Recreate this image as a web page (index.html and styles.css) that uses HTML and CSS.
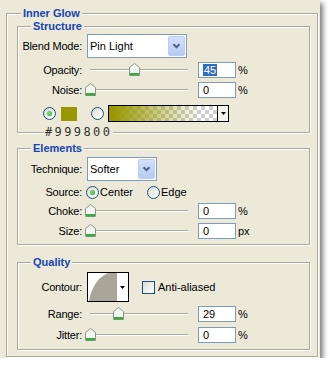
FILE: index.html
```html
<!DOCTYPE html>
<html>
<head>
<meta charset="utf-8">
<link rel="stylesheet" href="styles.css">
</head>
<body>
<div class="panel">
  <div class="group outer">
    <div class="title">Inner Glow</div>

    <div class="group sub structure">
      <div class="title">Structure</div>
      <div class="row r-select r-first">
        <span class="label">Blend Mode:</span>
        <div class="select wide">
          <span class="select-text">Pin Light</span>
          <span class="select-btn"><svg width="9" height="6" viewBox="0 0 9 6"><path d="M1.5 1.2 L4.5 4.2 L7.5 1.2" fill="none" stroke="#4d6185" stroke-width="2"/></svg></span>
        </div>
      </div>
      <div class="row r-field">
        <span class="label">Opacity:</span>
        <div class="slider" style="--v:0.45">
          <div class="track"></div>
          <svg class="thumb" width="11" height="13" viewBox="0 0 11 13"><path d="M0.5 4.5 L5.5 0.5 L10.5 4.5 V12.5 H0.5 Z" fill="#f3f5f1" stroke="#8c9789"/><rect x="1" y="10" width="9" height="2.5" fill="#3aa844"/></svg>
        </div>
        <div class="input"><span class="sel">45</span></div><span class="unit">%</span>
      </div>
      <div class="row r-field">
        <span class="label">Noise:</span>
        <div class="slider" style="--v:0">
          <div class="track"></div>
          <svg class="thumb" width="11" height="13" viewBox="0 0 11 13"><path d="M0.5 4.5 L5.5 0.5 L10.5 4.5 V12.5 H0.5 Z" fill="#f3f5f1" stroke="#8c9789"/><rect x="1" y="10" width="9" height="2.5" fill="#3aa844"/></svg>
        </div>
        <div class="input">0</div><span class="unit">%</span>
      </div>
      <div class="row r-color">
        <span class="radio checked color-radio"></span>
        <span class="swatch"></span>
        <span class="radio grad-radio"></span>
        <div class="gradient">
          <span class="grad-fill"></span>
          <span class="grad-btn"><svg width="5" height="3" viewBox="0 0 5 3"><path d="M0 0 H5 L2.5 3 Z" fill="#000"/></svg></span>
        </div>
      </div>
    </div>
    <div class="hex">#999800</div>

    <div class="group sub elements">
      <div class="title">Elements</div>
      <div class="row r-select r-tech">
        <span class="label">Technique:</span>
        <div class="select narrow">
          <span class="select-text">Softer</span>
          <span class="select-btn"><svg width="9" height="6" viewBox="0 0 9 6"><path d="M1.5 1.2 L4.5 4.2 L7.5 1.2" fill="none" stroke="#4d6185" stroke-width="2"/></svg></span>
        </div>
      </div>
      <div class="row r-source">
        <span class="label">Source:</span>
        <span class="radio checked src-radio"></span>
        <span class="radio-text center-text">Center</span>
        <span class="radio edge-radio"></span>
        <span class="radio-text">Edge</span>
      </div>
      <div class="row r-field">
        <span class="label">Choke:</span>
        <div class="slider" style="--v:0">
          <div class="track"></div>
          <svg class="thumb" width="11" height="13" viewBox="0 0 11 13"><path d="M0.5 4.5 L5.5 0.5 L10.5 4.5 V12.5 H0.5 Z" fill="#f3f5f1" stroke="#8c9789"/><rect x="1" y="10" width="9" height="2.5" fill="#3aa844"/></svg>
        </div>
        <div class="input">0</div><span class="unit">%</span>
      </div>
      <div class="row r-field">
        <span class="label">Size:</span>
        <div class="slider" style="--v:0">
          <div class="track"></div>
          <svg class="thumb" width="11" height="13" viewBox="0 0 11 13"><path d="M0.5 4.5 L5.5 0.5 L10.5 4.5 V12.5 H0.5 Z" fill="#f3f5f1" stroke="#8c9789"/><rect x="1" y="10" width="9" height="2.5" fill="#3aa844"/></svg>
        </div>
        <div class="input">0</div><span class="unit">px</span>
      </div>
    </div>

    <div class="group sub quality">
      <div class="title">Quality</div>
      <div class="row r-contour">
        <span class="label">Contour:</span>
        <div class="contour">
          <svg class="curve" width="29" height="28" viewBox="0 0 29 28"><path d="M1 28 C 3 17, 8 5, 20 0 L29 0 L29 28 Z" fill="#a9a699"/></svg>
          <span class="contour-btn"><svg width="5" height="3" viewBox="0 0 5 3"><path d="M0 0 H5 L2.5 3 Z" fill="#000"/></svg></span>
        </div>
        <span class="checkbox"></span>
        <span class="check-text">Anti-aliased</span>
      </div>
      <div class="row r-field">
        <span class="label">Range:</span>
        <div class="slider" style="--v:0.29">
          <div class="track"></div>
          <svg class="thumb" width="11" height="13" viewBox="0 0 11 13"><path d="M0.5 4.5 L5.5 0.5 L10.5 4.5 V12.5 H0.5 Z" fill="#f3f5f1" stroke="#8c9789"/><rect x="1" y="10" width="9" height="2.5" fill="#3aa844"/></svg>
        </div>
        <div class="input">29</div><span class="unit">%</span>
      </div>
      <div class="row r-field r-last">
        <span class="label">Jitter:</span>
        <div class="slider" style="--v:0">
          <div class="track"></div>
          <svg class="thumb" width="11" height="13" viewBox="0 0 11 13"><path d="M0.5 4.5 L5.5 0.5 L10.5 4.5 V12.5 H0.5 Z" fill="#f3f5f1" stroke="#8c9789"/><rect x="1" y="10" width="9" height="2.5" fill="#3aa844"/></svg>
        </div>
        <div class="input">0</div><span class="unit">%</span>
      </div>
    </div>
  </div>
</div>
</body>
</html>
```

FILE: styles.css
```css
html, body {
  margin: 0;
  padding: 0;
  background: #ffffff;
}

body {
  font-family: "Liberation Sans", Arial, sans-serif;
  font-size: 11px;
  color: #000;
}

.panel {
  width: 320px;
  height: 358px;
  box-sizing: border-box;
  padding: 13px 2px 1px 6px;
  background: #ece9d8;
  box-shadow: 3px 3px 5px rgba(0, 0, 0, 0.5);
}

.group {
  border: 1px solid #aca899;
  box-shadow: inset 1px 1px 0 #ffffff, 1px 1px 0 #ffffff;
}

.outer {
  width: 312px;
  box-sizing: border-box;
  padding: 0 7px 6px 10px;
}

.title {
  width: fit-content;
  margin-top: -7px;
  line-height: 13px;
  padding: 0 2px;
  background: #ece9d8;
  color: #1545b5;
  font-weight: bold;
}

.outer > .title {
  margin-left: 4px;
}

.sub > .title {
  margin-left: 13px;
}

.structure {
  margin-top: 6px;
  padding-bottom: 10px;
}

.elements {
  margin-top: 10px;
  padding-bottom: 5px;
}

.quality {
  margin-top: 17px;
  padding-bottom: 6px;
}

.hex {
  width: fit-content;
  margin: -6px 0 0 27px;
  padding: 0 1px;
  background: #ece9d8;
  font-family: "DejaVu Sans Mono", monospace;
  font-size: 12px;
  line-height: 11px;
  letter-spacing: 2.4px;
  color: #333333;
  position: relative;
}

.row {
  display: flex;
  align-items: center;
}

.label {
  width: 64px;
  flex-shrink: 0;
  text-align: right;
  white-space: nowrap;
  letter-spacing: -0.2px;
}

.r-select { height: 24px; }
.r-first { margin-top: 1px; }
.r-tech { margin-top: 2px; }
.r-field { height: 16px; margin-top: 4px; }
.r-last { margin-top: 5px; }
.r-color { height: 17px; margin-top: 7px; }
.r-source { height: 14px; margin-top: 4px; }
.r-contour { height: 30px; margin-top: 3px; }

/* dropdown */
.select {
  display: flex;
  height: 24px;
  box-sizing: border-box;
  border: 1px solid #7f9db9;
  background: #ffffff;
  margin-left: 5px;
}

.select.wide { width: 100px; }
.select.narrow { width: 70px; }

.select-text {
  flex: 1;
  padding-left: 2px;
  line-height: 23px;
  white-space: nowrap;
}

.select-btn {
  width: 17px;
  margin: 1px;
  box-sizing: border-box;
  border: 1px solid #bccdf6;
  border-radius: 2px;
  background: linear-gradient(#d3e0fd, #b7caf5);
  display: flex;
  align-items: center;
  justify-content: center;
}

/* slider */
.slider {
  position: relative;
  width: 106px;
  height: 16px;
  margin-left: 5px;
  flex-shrink: 0;
}

.track {
  margin: 7px 5px 0 3px;
  height: 0;
  border-top: 1px solid #aaa99d;
  border-bottom: 1px solid #ffffff;
}

.thumb {
  position: absolute;
  top: 1px;
  left: calc(var(--v) * 98px - 2.5px);
}

/* text field */
.input {
  width: 38px;
  height: 16px;
  box-sizing: border-box;
  border: 1px solid #7f9db9;
  background: #ffffff;
  margin-left: 5px;
  padding-left: 4px;
  line-height: 14px;
  flex-shrink: 0;
}

.sel {
  background: #316ac5;
  color: #ffffff;
  padding: 0 1px;
}

.unit {
  margin-left: 2px;
}

/* radios and checkbox */
.radio {
  width: 13px;
  height: 13px;
  box-sizing: border-box;
  border: 1px solid #1c5180;
  border-radius: 50%;
  background: linear-gradient(135deg, #dcdcd5, #ffffff);
  flex-shrink: 0;
  display: flex;
  align-items: center;
  justify-content: center;
}

.radio.checked::after {
  content: "";
  width: 5px;
  height: 5px;
  border-radius: 50%;
  background: radial-gradient(circle at 40% 40%, #7fe07f, #21a121);
}

.color-radio { margin-left: 25px; }
.src-radio { margin-left: 4px; }
.grad-radio { margin-left: 14px; }
.edge-radio { margin-left: 1px; }

.radio-text {
  margin-left: 1px;
}

.center-text {
  width: 46px;
}

.swatch {
  width: 16px;
  height: 14px;
  margin-left: 5px;
  background: #999800;
}

.gradient {
  display: flex;
  width: 121px;
  height: 17px;
  box-sizing: border-box;
  margin-left: 4px;
  border: 1px solid #000000;
}

.grad-fill {
  flex: 1;
  background:
    linear-gradient(to right, #999800 4%, rgba(153, 152, 0, 0) 85%),
    conic-gradient(#cfcfcf 25%, #ffffff 0 50%, #cfcfcf 0 75%, #ffffff 0) 0 0 / 8px 8px;
}

.grad-btn {
  width: 10px;
  border-left: 1px solid #000000;
  background: #f4f3ee;
  display: flex;
  align-items: center;
  justify-content: center;
}

.contour {
  display: flex;
  width: 42px;
  height: 30px;
  box-sizing: border-box;
  margin-left: 5px;
  border: 1px solid #000000;
  background: #ffffff;
}

.curve {
  display: block;
}

.contour-btn {
  flex: 1;
  display: flex;
  align-items: center;
  justify-content: center;
}

.checkbox {
  width: 13px;
  height: 13px;
  box-sizing: border-box;
  margin-left: 13px;
  border: 1px solid #1c5180;
  background: linear-gradient(135deg, #dcdcd5, #ffffff);
  flex-shrink: 0;
}

.check-text {
  margin-left: 3px;
}
```
